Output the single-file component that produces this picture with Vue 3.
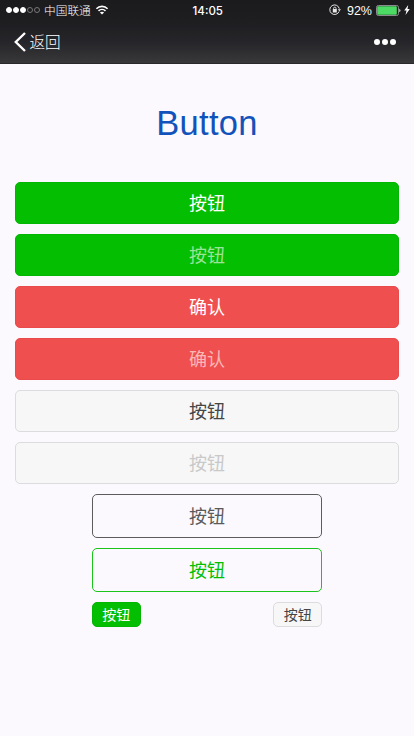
<script setup>
const signal = [true, true, true, false, false]
const buttons = [
  { text: '按钮', kind: 'primary' },
  { text: '按钮', kind: 'primary', disabled: true },
  { text: '确认', kind: 'warn' },
  { text: '确认', kind: 'warn', disabled: true },
  { text: '按钮', kind: 'default' },
  { text: '按钮', kind: 'default', disabled: true },
]
</script>

<template>
  <div class="screen">
    <header class="top">
      <div class="status">
        <div class="carrier">
          <div class="signal">
            <i v-for="(on, i) in signal" :key="i" :class="['dot', { on }]"></i>
          </div>
          <span class="network">中国联通</span>
          <svg class="wifi" width="14" height="10" viewBox="0 0 14 10" fill="none" stroke="#fff" stroke-width="1.6">
            <path d="M1.4 3.7C4.5.6 9.5.6 12.6 3.7M3.5 5.8c2-1.8 5-1.8 7 0" />
            <path d="M7 9.5 4.9 7.5c1.2-1.1 3-1.1 4.2 0z" fill="#fff" stroke="none" />
          </svg>
        </div>
        <span class="time">14:05</span>
        <div class="power">
          <svg width="12" height="12" viewBox="0 0 12 12" fill="none" stroke="#e8e8e8">
            <path d="M10.1 7.4A4.8 4.8 0 1 1 10.3 4.7" stroke-width="1" />
            <path d="M8.8 5.2H12L10.4 7.3z" fill="#e8e8e8" stroke="none" />
            <path d="M4.6 5.4V4.3a1.2 1.2 0 0 1 2.4 0v1.1" stroke-width=".9" />
            <rect x="3.8" y="5.1" width="4" height="3.4" rx=".3" fill="#e8e8e8" stroke="none" />
          </svg>
          <span class="percent">92%</span>
          <svg class="battery" width="25" height="11" viewBox="0 0 25 11">
            <rect x=".5" y=".5" width="22" height="10" rx="1.8" fill="none" stroke="#8b8b8d" />
            <rect x="1.2" y="1.2" width="19.6" height="8.6" rx=".8" fill="#4cd964" />
            <path d="M23.3 3.8c1.6.5 1.6 2.9 0 3.4z" fill="#ddd" />
          </svg>
          <svg class="bolt" width="6" height="10" viewBox="0 0 6 10" fill="#fff">
            <path d="M4.2 0 .2 5.6h2.3L1.5 10 5.8 4.1H3.5z" />
          </svg>
        </div>
      </div>
      <nav class="nav">
        <div class="back">
          <svg width="12" height="20" viewBox="0 0 12 20" fill="none" stroke="#fff" stroke-width="2.4">
            <path d="M11 1 1.8 10l9.2 9" />
          </svg>
          <span>返回</span>
        </div>
        <div class="more"><i></i><i></i><i></i></div>
      </nav>
    </header>

    <h1 class="title">Button</h1>

    <main class="content">
      <button
        v-for="(b, i) in buttons"
        :key="i"
        :class="['btn', b.kind, { disabled: b.disabled }]"
      >{{ b.text }}</button>
      <div class="narrow">
        <button class="btn plain">按钮</button>
        <button class="btn plain green">按钮</button>
        <div class="minis">
          <button class="btn mini primary">按钮</button>
          <button class="btn mini default">按钮</button>
        </div>
      </div>
    </main>
  </div>
</template>

<style>
body {
  background: #fbf9fe;
}
</style>

<style scoped>
.screen {
  width: 414px;
  height: 736px;
  overflow: hidden;
  background: #fbf9fe;
  font-family: "Liberation Sans", "Noto Sans CJK SC", sans-serif;
}
.top {
  height: 64px;
  box-sizing: border-box;
  border-bottom: 1px solid #29292b;
  background: linear-gradient(#1b1b1e 0, #1e1e21 22px, #26262a 42px, #38383a 63px);
  color: #fff;
}
.status {
  display: grid;
  grid-template-columns: 1fr auto 1fr;
  align-items: center;
  height: 20px;
  padding: 0 4.5px 0 6px;
  font-size: 12px;
}
.carrier,
.signal,
.power,
.back,
.more {
  display: flex;
  align-items: center;
}
.signal {
  gap: 1px;
}
.dot {
  width: 6px;
  height: 6px;
  box-sizing: border-box;
  border: 1px solid #777;
  border-radius: 50%;
}
.dot.on {
  border-color: #fff;
  background: #fff;
}
.network {
  margin-left: 4px;
  padding-top: 1px;
  font-size: 11.7px;
  font-weight: 300;
  line-height: 19px;
}
.wifi {
  margin-left: 4px;
}
.time {
  padding-top: 1px;
  font-family: Inter, sans-serif;
  font-size: 11.5px;
  font-weight: 500;
}
.power {
  justify-content: flex-end;
}
.percent {
  margin: 0 4px 0 6px;
  padding-top: 1px;
  font-size: 12.5px;
}
.bolt {
  margin-left: 2.5px;
}
.nav {
  display: flex;
  align-items: center;
  justify-content: space-between;
  height: 44px;
  box-sizing: border-box;
  padding: 0 18px 0 14px;
}
.back {
  gap: 3.5px;
  font-size: 15.6px;
  font-weight: 300;
  line-height: 22px;
}
.back span {
  padding-top: 2px;
}
.more {
  gap: 2px;
}
.more i {
  width: 6px;
  height: 6px;
  border-radius: 50%;
  background: #fff;
}
.title {
  margin: 38px 0 0;
  text-align: center;
  font-size: 34.5px;
  font-weight: 400;
  letter-spacing: 0.3px;
  line-height: 42px;
  color: #1253bb;
}
.content {
  display: flex;
  flex-direction: column;
  gap: 10px;
  padding: 38px 15px 0;
}
.btn {
  display: flex;
  align-items: center;
  justify-content: center;
  width: 100%;
  height: 42px;
  margin: 0;
  padding: 2px 0 0;
  border: 1px solid transparent;
  border-radius: 5px;
  font: inherit;
  font-size: 18px;
  line-height: 26px;
  background: none;
}
.primary {
  border-color: #04b604;
  background: #04be02;
  color: #fff;
}
.warn {
  border-color: #e94b4c;
  background: #ef4f4f;
  color: #fff;
}
.default {
  border-color: #dcdcde;
  background: #f7f7f7;
  color: #454545;
}
.primary.disabled,
.warn.disabled {
  color: rgba(255, 255, 255, 0.6);
}
.default.disabled {
  color: #c9c9c9;
}
.narrow {
  display: flex;
  flex-direction: column;
  gap: 10px;
  width: 60%;
  margin: 0 auto;
}
.plain {
  height: 44px;
  border-color: #5c5c5c;
  color: #5a5a5a;
}
.plain.green {
  border-color: #1bc41b;
  color: #04be02;
}
.minis {
  display: flex;
  justify-content: space-between;
}
.mini {
  width: 49px;
  height: 25px;
  padding: 0;
  font-size: 14px;
  line-height: 20px;
}
</style>
